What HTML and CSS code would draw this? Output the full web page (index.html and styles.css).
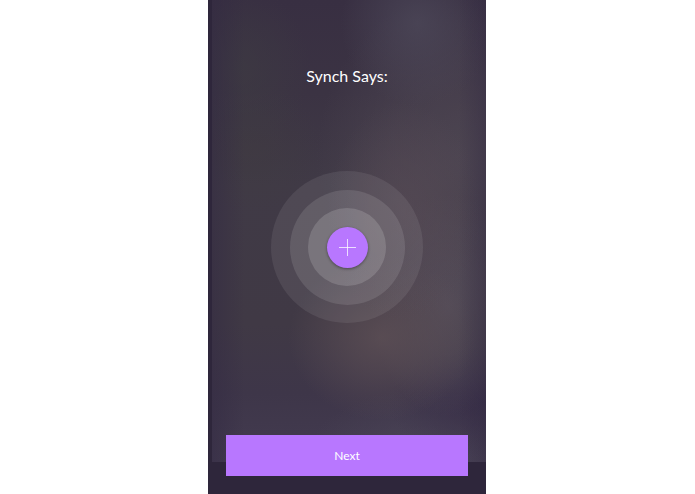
FILE: index.html
```html
<!DOCTYPE html>
<html lang="en">
<head>
    <meta charset="UTF-8">
    <meta name="viewport" content="width=device-width, initial-scale=1.0">
    <title>Synch</title>
    <link rel="stylesheet" href="styles.css">
</head>
<body>
    <main class="screen">
        <h1 class="title">Synch Says:</h1>

        <div class="ring ring-outer">
            <div class="ring ring-middle">
                <div class="ring ring-inner">
                    <button class="add-button" type="button" aria-label="Add">
                        <svg width="17" height="17" viewBox="0 0 17 17" aria-hidden="true">
                            <path d="M8.5 0v17M0 8.5h17" stroke="#fff" stroke-opacity="0.75" fill="none"/>
                        </svg>
                    </button>
                </div>
            </div>
        </div>

        <button class="next-button" type="button">Next</button>
    </main>
</body>
</html>
```

FILE: styles.css
```css
* {
    box-sizing: border-box;
}
body {
    margin: 0;
    padding-right: 1px;
    background-color: #fff;
    font-family: Lato, sans-serif;
}
.screen {
    display: grid;
    grid-template-rows: 1fr auto 1fr;
    justify-items: center;
    width: 40%;
    min-width: 240px;
    min-height: 100vh;
    margin: 0 auto;
    padding: 0 18px;
    color: #fff;
    background-color: #2e263b;
    /* blurred backdrop, leaves a strip on the left and at the bottom */
    background-image:
        linear-gradient(90deg, rgba(50, 41, 66, 0.5), rgba(50, 41, 66, 0) 12%, rgba(50, 41, 66, 0) 90%, rgba(50, 41, 66, 0.4)),
        radial-gradient(ellipse 28% 18% at 75% 5%, rgba(76, 71, 88, 0.8), rgba(76, 71, 88, 0.5) 40%, rgba(76, 71, 88, 0)),
        radial-gradient(ellipse 26% 18% at 10% 15%, rgba(62, 60, 66, 0.6), rgba(62, 60, 66, 0)),
        radial-gradient(ellipse 26% 14% at 14% 32%, rgba(64, 60, 64, 0.5), rgba(64, 60, 64, 0)),
        radial-gradient(ellipse 28% 24% at 70% 46%, rgba(92, 78, 88, 0.5), rgba(92, 78, 88, 0.3) 45%, rgba(92, 78, 88, 0)),
        radial-gradient(ellipse 34% 18% at 62% 73%, rgba(94, 80, 86, 0.8), rgba(94, 80, 86, 0.5) 40%, rgba(94, 80, 86, 0)),
        radial-gradient(ellipse 28% 24% at 86% 66%, rgba(88, 80, 92, 0.8), rgba(88, 80, 92, 0.5) 45%, rgba(88, 80, 92, 0)),
        radial-gradient(ellipse 34% 12% at 98% 87%, rgba(56, 46, 72, 0.8), rgba(56, 46, 72, 0)),
        radial-gradient(ellipse 54% 36% at 92% 34%, rgba(80, 72, 84, 0.8), rgba(80, 72, 84, 0.5) 50%, rgba(80, 72, 84, 0)),
        radial-gradient(ellipse 44% 16% at 78% 100%, rgba(76, 70, 88, 0.9), rgba(76, 70, 88, 0)),
        linear-gradient(180deg, #382f42, #3b3343 20%, #403a46 40%, #403945 70%, #3e3649 85%, #433b50);
    background-size: calc(100% - 4px) calc(100% - 32px);
    background-position: right top;
    background-repeat: no-repeat;
}
.title {
    margin: 66px 0 0;
    font-size: 16px;
    font-weight: 400;
    line-height: 20px;
}
.ring {
    display: grid;
    place-items: center;
    border-radius: 50%;
}
.ring-outer {
    width: 152px;
    height: 152px;
    background-color: rgba(255, 255, 255, 0.08);
}
.ring-middle {
    width: 115px;
    height: 115px;
    background-color: rgba(255, 255, 255, 0.11);
}
.ring-inner {
    width: 78px;
    height: 78px;
    background-color: rgba(255, 255, 255, 0.15);
}
.add-button {
    display: grid;
    place-items: center;
    width: 41px;
    height: 41px;
    padding: 0;
    border: none;
    border-radius: 50%;
    background-color: #b877ff;
    box-shadow: 0 1px 3px rgba(0, 0, 0, 0.4);
    cursor: pointer;
}
.next-button {
    align-self: end;
    width: 100%;
    height: 41px;
    margin-bottom: 18px;
    border: none;
    background-color: #b877ff;
    color: #fff;
    font-family: inherit;
    font-size: 12px;
    cursor: pointer;
}
```
